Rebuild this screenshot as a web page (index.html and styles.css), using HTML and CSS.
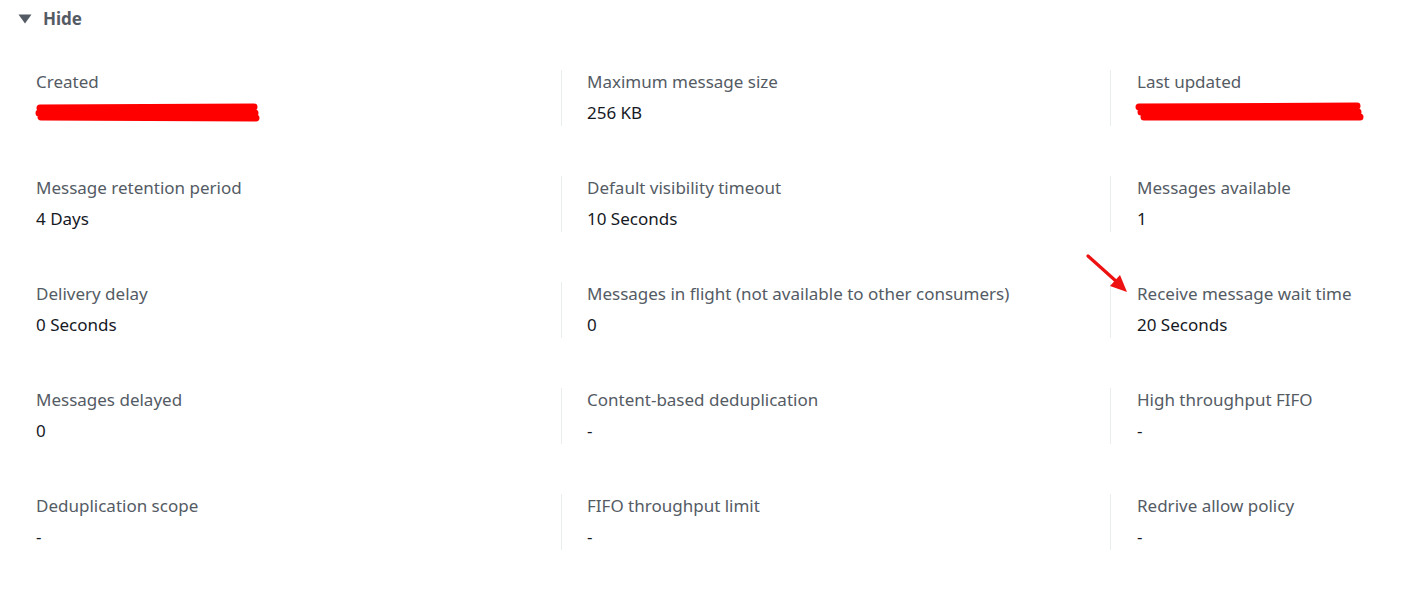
FILE: index.html
```html
<!DOCTYPE html>
<html lang="en">
<head>
<meta charset="utf-8">
<title>Queue details</title>
<link rel="stylesheet" href="styles.css">
</head>
<body>
<div class="panel">
  <div class="toggle">
    <svg class="caret" width="14" height="10" viewBox="0 0 14 10"><polygon points="0.5,0.5 13.5,0.5 7,9.5" fill="#545b64"/></svg>
    <span class="toggle-text">Hide</span>
  </div>
  <div class="grid">
    <div class="item"><div class="label">Created</div><div class="value"><svg class="redact" width="228" height="20" viewBox="0 0 228 20"><path d="M6 6 L220 5 M5 11 L221 11 M7 15 L222 16" stroke="#ff0000" stroke-width="7" stroke-linecap="round" fill="none"/></svg></div></div>
    <div class="item sep"><div class="label">Maximum message size</div><div class="value">256 KB</div></div>
    <div class="item sep sep3"><div class="label">Last updated</div><div class="value"><svg class="redact" width="230" height="20" viewBox="0 0 230 20"><path d="M4 5 L222 4 M6 10 L223 10 M9 15 L225 15" stroke="#ff0000" stroke-width="7" stroke-linecap="round" fill="none"/></svg></div></div>

    <div class="item"><div class="label">Message retention period</div><div class="value">4 Days</div></div>
    <div class="item sep"><div class="label">Default visibility timeout</div><div class="value">10 Seconds</div></div>
    <div class="item sep sep3"><div class="label">Messages available</div><div class="value">1</div></div>

    <div class="item"><div class="label">Delivery delay</div><div class="value">0 Seconds</div></div>
    <div class="item sep"><div class="label">Messages in flight (not available to other consumers)</div><div class="value">0</div></div>
    <div class="item sep sep3"><div class="label">Receive message wait time</div><div class="value">20 Seconds</div></div>

    <div class="item"><div class="label">Messages delayed</div><div class="value">0</div></div>
    <div class="item sep"><div class="label">Content-based deduplication</div><div class="value">-</div></div>
    <div class="item sep sep3"><div class="label">High throughput FIFO</div><div class="value">-</div></div>

    <div class="item"><div class="label">Deduplication scope</div><div class="value">-</div></div>
    <div class="item sep"><div class="label">FIFO throughput limit</div><div class="value">-</div></div>
    <div class="item sep sep3"><div class="label">Redrive allow policy</div><div class="value">-</div></div>
  </div>
  <svg class="arrow" width="50" height="45" viewBox="0 0 50 45"><line x1="3" y1="3" x2="32" y2="29" stroke="#ee1111" stroke-width="3.2" stroke-linecap="round"/><polygon points="42,39 25,33 35,22" fill="#ee1111"/></svg>
</div>
</body>
</html>
```
FILE: styles.css
```css
html, body {
  margin: 0;
  padding: 0;
  background: #ffffff;
}
body {
  font-family: "Noto Sans", "Open Sans", sans-serif;
  font-size: 17px;
  color: #16191f;
}
.panel {
  position: relative;
  width: 1404px;
  height: 606px;
}
.toggle {
  display: flex;
  align-items: center;
  height: 38px;
  padding-left: 18px;
  gap: 11px;
}
.caret {
  display: block;
}
.toggle-text {
  font-weight: 700;
  color: #545b64;
  font-size: 17px;
  line-height: 22px;
}
.grid {
  display: grid;
  grid-template-columns: 525px 549px 1fr;
  row-gap: 50px;
  margin-top: 32px;
  padding-left: 36px;
}
.item {
  height: 56px;
  box-sizing: border-box;
  padding-top: 1px;
}
.sep {
  border-left: 1px solid #eaeded;
  padding-left: 25px;
}
.sep3 {
  padding-left: 26px;
}
.label {
  color: #545b64;
  line-height: 22px;
  white-space: nowrap;
}
.value {
  margin-top: 9px;
  line-height: 22px;
  height: 22px;
}
.redact {
  display: block;
  margin-left: -2px;
  margin-top: 0;
}
.arrow {
  position: absolute;
  left: 1085px;
  top: 253px;
}
```
